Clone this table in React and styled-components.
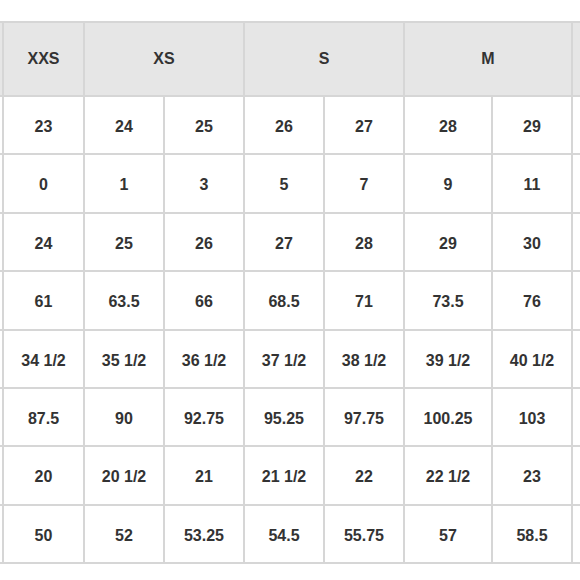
import React from "react";
import styled, { createGlobalStyle } from "styled-components";

const Global = createGlobalStyle`
  html, body { margin: 0; padding: 0; background: #ffffff; }
  body { width: 580px; height: 580px; overflow: hidden; }
`;

const Viewport = styled.div`
  width: 580px;
  height: 580px;
  overflow: hidden;
  padding-top: 21px;
  box-sizing: border-box;
`;

const Grid = styled.div`
  display: grid;
  grid-template-columns: 4px 81px 80px 80px 80px 80px 88px 80px 160px;
  grid-template-rows: 74px 58px 59px 58px 59px 58px 58px 59px 58px;
  border-top: 2px solid #d6d6d6;
  width: max-content;
  font-family: "Liberation Sans", Arial, Helvetica, sans-serif;
  font-weight: 700;
  font-size: 16px;
  color: #333333;
`;

const Cell = styled.div`
  box-sizing: border-box;
  border-right: 2px solid #d6d6d6;
  border-bottom: 2px solid #d6d6d6;
  padding-top: ${(p) => (p.$head ? "0" : "3px")};
  display: flex;
  align-items: center;
  justify-content: center;
  white-space: nowrap;
  background: ${(p) => (p.$head ? "#e6e6e6" : "#ffffff")};
  grid-column: span ${(p) => p.$span || 1};
`;

const heads = [
  { label: "", span: 1 },
  { label: "XXS", span: 1 },
  { label: "XS", span: 2 },
  { label: "S", span: 2 },
  { label: "M", span: 2 },
  { label: "", span: 1 },
];

const rows = [
  ["23", "24", "25", "26", "27", "28", "29"],
  ["0", "1", "3", "5", "7", "9", "11"],
  ["24", "25", "26", "27", "28", "29", "30"],
  ["61", "63.5", "66", "68.5", "71", "73.5", "76"],
  ["34 1/2", "35 1/2", "36 1/2", "37 1/2", "38 1/2", "39 1/2", "40 1/2"],
  ["87.5", "90", "92.75", "95.25", "97.75", "100.25", "103"],
  ["20", "20 1/2", "21", "21 1/2", "22", "22 1/2", "23"],
  ["50", "52", "53.25", "54.5", "55.75", "57", "58.5"],
];

export default function App() {
  return (
    <>
      <Global />
      <Viewport>
        <Grid role="table">
          {heads.map((h, i) => (
            <Cell key={"h" + i} $head $span={h.span} role="columnheader">
              {h.label}
            </Cell>
          ))}
          {rows.map((r, ri) => (
            <React.Fragment key={ri}>
              <Cell role="rowheader" />
              {r.map((v, ci) => (
                <Cell key={ci} role="cell">
                  {v}
                </Cell>
              ))}
              <Cell role="cell" />
            </React.Fragment>
          ))}
        </Grid>
      </Viewport>
    </>
  );
}
